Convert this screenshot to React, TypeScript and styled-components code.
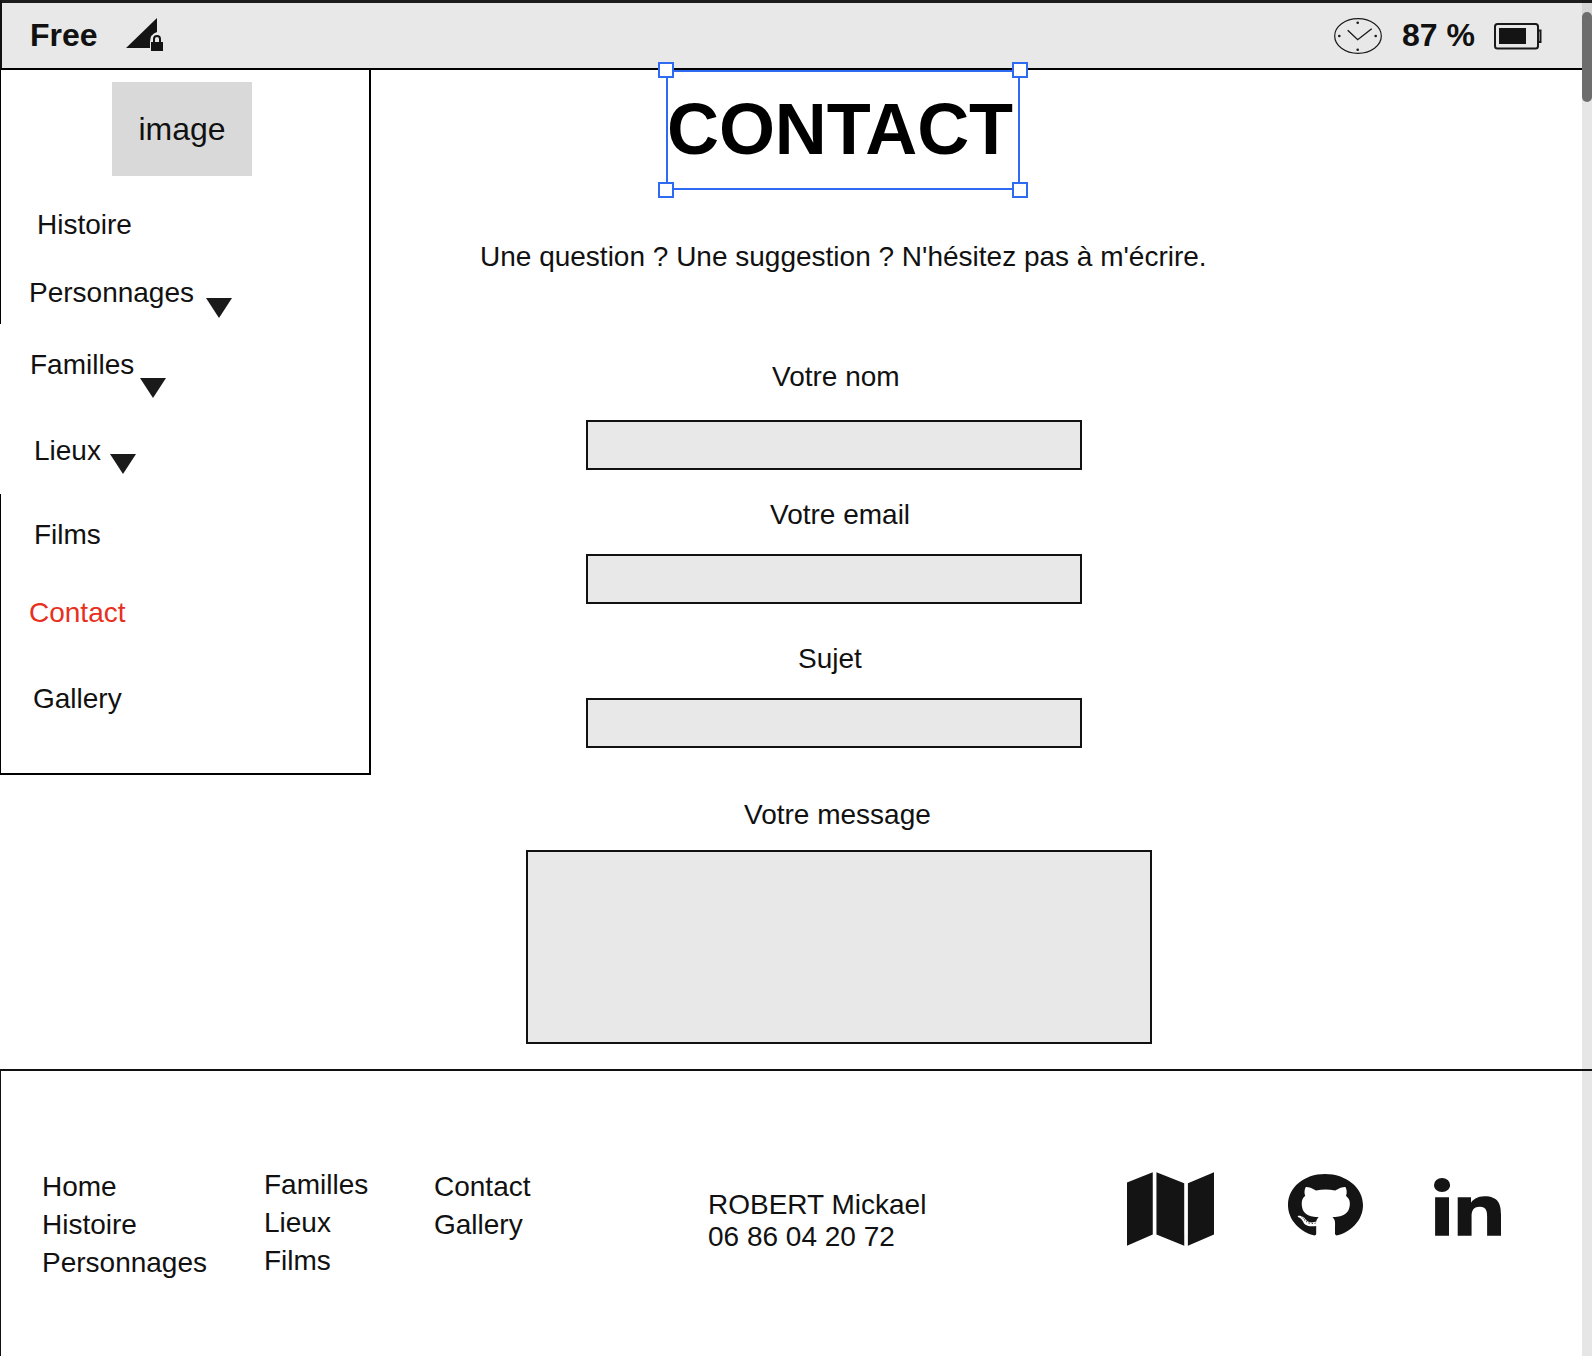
import React from "react";
import styled, { createGlobalStyle } from "styled-components";
import { FaGithub, FaLinkedinIn } from "react-icons/fa";

const Global = createGlobalStyle`
  html, body { margin: 0; padding: 0; background: #fff; overflow: hidden; }
  body { font-family: "Liberation Sans", Arial, sans-serif; color: #111; }
`;

const Page = styled.div`
  position: relative;
  width: 1592px;
  height: 1356px;
  overflow: hidden;
  display: flex;
  flex-direction: column;
`;

const StatusBar = styled.header`
  box-sizing: border-box;
  height: 70px;
  flex: none;
  display: flex;
  align-items: center;
  background: #e8e8e8;
  border-top: 3px solid #1c1c1c;
  border-left: 2px solid #111;
  border-bottom: 2px solid #000;
  padding: 0 50px 0 28px;
`;

const Carrier = styled.span`
  font-size: 32px;
  font-weight: 700;
  color: #111;
`;

const SignalIcon = styled.svg`
  margin: 0 0 3px 28px;
  width: 37px;
  height: 33px;
  flex: none;
`;

const StatusRight = styled.div`
  margin-left: auto;
  display: flex;
  align-items: center;
`;

const Percent = styled.span`
  font-size: 32px;
  font-weight: 700;
  margin: 0 19px 0 20px;
  color: #111;
`;

const ClockSvg = styled.svg`
  width: 48px;
  height: 36px;
  flex: none;
`;

const BatterySvg = styled.svg`
  width: 48px;
  height: 27px;
  margin-top: 2px;
  flex: none;
`;

const Body = styled.div`
  flex: none;
  height: 999px;
  display: flex;
  align-items: flex-start;
`;

const Sidebar = styled.nav`
  box-sizing: border-box;
  width: 371px;
  height: 705px;
  flex: none;
  border-right: 2px solid #000;
  border-bottom: 2px solid #000;
  background: linear-gradient(#000, #000) left top / 1px 254px no-repeat,
    linear-gradient(#000, #000) left bottom / 1px 279px no-repeat;
  display: flex;
  flex-direction: column;
  align-items: flex-start;
`;

const ImageBox = styled.div`
  width: 140px;
  height: 94px;
  margin: 12px 0 0 112px;
  background: #d9d9d9;
  display: flex;
  align-items: center;
  justify-content: center;
  font-size: 32px;
  color: #111;
`;

const NavItem = styled.a<{ $left: number; $top: number; $active?: boolean }>`
  display: flex;
  align-items: flex-start;
  height: 34px;
  line-height: 34px;
  margin: ${(p) => p.$top}px 0 0 ${(p) => p.$left}px;
  font-size: 28px;
  color: ${(p) => (p.$active ? "#e8301f" : "#111")};
  white-space: nowrap;
`;

const Caret = styled.span<{ $gap: number; $drop: number }>`
  width: 0;
  height: 0;
  margin: ${(p) => p.$drop}px 0 0 ${(p) => p.$gap}px;
  border-left: 13px solid transparent;
  border-right: 13px solid transparent;
  border-top: 20px solid #1a1a1a;
`;

const Main = styled.main`
  flex: 1;
  min-width: 0;
  display: flex;
  flex-direction: column;
  align-items: flex-start;
`;

const TitleBox = styled.div`
  position: relative;
  box-sizing: border-box;
  width: 354px;
  height: 120px;
  margin: 0 0 0 295px;
  border: 2px solid #2f6bf2;
  display: flex;
  align-items: flex-start;
`;

const Title = styled.h1`
  margin: 0 0 0 -1px;
  font-size: 72px;
  line-height: 114px;
  letter-spacing: -0.1px;
  font-weight: 700;
  color: #000;
  white-space: nowrap;
`;

const Handle = styled.span<{ $x: "left" | "right"; $y: "top" | "bottom" }>`
  position: absolute;
  box-sizing: border-box;
  width: 16px;
  height: 16px;
  background: #fff;
  border: 2px solid #2f6bf2;
  ${(p) => p.$x}: -10px;
  ${(p) => p.$y}: -10px;
`;

const Intro = styled.p`
  margin: 50px 0 0 109px;
  font-size: 28px;
  line-height: 34px;
  color: #111;
  white-space: nowrap;
`;

const FieldLabel = styled.label<{ $left: number; $top: number }>`
  display: block;
  margin: ${(p) => p.$top}px 0 0 ${(p) => p.$left}px;
  font-size: 28px;
  line-height: 34px;
  color: #111;
  white-space: nowrap;
`;

const Input = styled.div<{ $top: number }>`
  box-sizing: border-box;
  width: 496px;
  height: 50px;
  margin: ${(p) => p.$top}px 0 0 215px;
  background: #e8e8e8;
  border: 2px solid #111;
`;

const TextArea = styled.div`
  box-sizing: border-box;
  width: 626px;
  height: 194px;
  margin: 18px 0 0 155px;
  background: #e8e8e8;
  border: 2px solid #111;
`;

const Footer = styled.footer`
  position: relative;
  z-index: 1;
  box-sizing: border-box;
  flex: 1;
  display: flex;
  align-items: flex-start;
  border-top: 2px solid #111;
  background: linear-gradient(#111, #111) left top / 1px 100% no-repeat;
`;

const FooterColumn = styled.ul<{ $left: number; $top: number; $width: number }>`
  list-style: none;
  margin: ${(p) => p.$top}px 0 0 ${(p) => p.$left}px;
  padding: 0;
  width: ${(p) => p.$width}px;
  flex: none;
  font-size: 28px;
  line-height: 38px;
  color: #111;
  white-space: nowrap;
`;

const Contact = styled.address`
  flex: none;
  margin: 118px 0 0 0;
  width: 419px;
  font-style: normal;
  font-size: 28px;
  line-height: 32px;
  color: #111;
  white-space: nowrap;
`;

const SocialSlot = styled.a<{ $width: number; $top: number }>`
  display: flex;
  flex: none;
  width: ${(p) => p.$width}px;
  margin-top: ${(p) => p.$top}px;
  color: #141414;
`;

const GithubIcon = styled(FaGithub)`
  width: 75px;
  height: 65px;
`;

const LinkedinIcon = styled(FaLinkedinIn)`
  width: 67px;
  height: 66px;
`;

const Scrollbar = styled.div`
  position: absolute;
  top: 3px;
  right: 0;
  bottom: 0;
  width: 10px;
  background: linear-gradient(#d6d6d6 0 65px, #e6e6e6 65px);
`;

const Thumb = styled.div`
  position: absolute;
  top: 9px;
  left: 0;
  width: 10px;
  height: 90px;
  border-radius: 5px;
  background: #6d6d6d;
`;

const ClockIcon = () => (
  <ClockSvg viewBox="0 0 48 36" fill="none" stroke="#1a1a1a">
    <ellipse cx="24" cy="18" rx="23.3" ry="17.3" strokeWidth="1.2" />
    <path d="M13.7 12.3 L23.7 21.7 L37.7 10.7" strokeWidth="1.4" />
    <circle cx="23.7" cy="4.7" r="1.3" fill="#1a1a1a" stroke="none" />
    <circle cx="23.7" cy="31.7" r="1.3" fill="#1a1a1a" stroke="none" />
    <circle cx="5.3" cy="18" r="1.3" fill="#1a1a1a" stroke="none" />
    <circle cx="41.7" cy="18" r="1.3" fill="#1a1a1a" stroke="none" />
  </ClockSvg>
);

const BatteryIcon = () => (
  <BatterySvg viewBox="0 0 48 27" fill="none">
    <rect x="1" y="1" width="43" height="24.5" rx="2.5" stroke="#1a1a1a" strokeWidth="2" />
    <rect x="5" y="5" width="27" height="16" fill="#141414" />
    <path d="M44.5 7.5h2v11.5h-2" stroke="#1a1a1a" strokeWidth="2" />
  </BatterySvg>
);

const MapIcon = () => (
  <svg width="87" height="74" viewBox="80 97 260 220" fill="#141414">
    <path d="M80 128 L157 97 V283 L80 317 Z" />
    <path d="M168 97 L251 130 V317 L168 283 Z" />
    <path d="M262 130 L340 97 V283 L262 317 Z" />
  </svg>
);

export default function App() {
  return (
    <Page>
      <Global />
      <StatusBar>
        <Carrier>Free</Carrier>
        <SignalIcon viewBox="0 0 37 33">
          <path d="M0 30 L31 0 V14 Q24 16 24 24 V30 Z" fill="#141414" />
          <path
            d="M25 33 V24 H27 V21 a4 4 0 0 1 8 0 V24 H37 V33 Z M29 24 H33 V21 a2 2 0 0 0 -4 0 Z"
            fill="#141414"
            fillRule="evenodd"
          />
        </SignalIcon>
        <StatusRight>
          <ClockIcon />
          <Percent>87 %</Percent>
          <BatteryIcon />
        </StatusRight>
      </StatusBar>
      <Body>
        <Sidebar>
          <ImageBox>image</ImageBox>
          <NavItem $left={37} $top={32}>Histoire</NavItem>
          <NavItem $left={29} $top={34}>
            Personnages
            <Caret $gap={12} $drop={22} />
          </NavItem>
          <NavItem $left={30} $top={38}>
            Familles
            <Caret $gap={6} $drop={30} />
          </NavItem>
          <NavItem $left={34} $top={52}>
            Lieux
            <Caret $gap={9} $drop={20} />
          </NavItem>
          <NavItem $left={34} $top={50}>Films</NavItem>
          <NavItem $left={29} $top={44} $active>Contact</NavItem>
          <NavItem $left={33} $top={52}>Gallery</NavItem>
        </Sidebar>
        <Main>
          <TitleBox>
            <Title>CONTACT</Title>
            <Handle $x="left" $y="top" />
            <Handle $x="right" $y="top" />
            <Handle $x="left" $y="bottom" />
            <Handle $x="right" $y="bottom" />
          </TitleBox>
          <Intro>Une question ? Une suggestion ? N'hésitez pas à m'écrire.</Intro>
          <FieldLabel $left={401} $top={86}>Votre nom</FieldLabel>
          <Input $top={26} />
          <FieldLabel $left={399} $top={28}>Votre email</FieldLabel>
          <Input $top={22} />
          <FieldLabel $left={427} $top={38}>Sujet</FieldLabel>
          <Input $top={22} />
          <FieldLabel $left={373} $top={50}>Votre message</FieldLabel>
          <TextArea />
        </Main>
      </Body>
      <Footer>
        <FooterColumn $left={42} $top={97} $width={222}>
          <li>Home</li>
          <li>Histoire</li>
          <li>Personnages</li>
        </FooterColumn>
        <FooterColumn $left={0} $top={95} $width={170}>
          <li>Familles</li>
          <li>Lieux</li>
          <li>Films</li>
        </FooterColumn>
        <FooterColumn $left={0} $top={97} $width={274}>
          <li>Contact</li>
          <li>Gallery</li>
        </FooterColumn>
        <Contact>
          ROBERT Mickael
          <br />
          06 86 04 20 72
        </Contact>
        <SocialSlot $width={161} $top={101}><MapIcon /></SocialSlot>
        <SocialSlot $width={146} $top={102}>
          <GithubIcon preserveAspectRatio="none" />
        </SocialSlot>
        <SocialSlot $width={67} $top={107}>
          <LinkedinIcon preserveAspectRatio="none" />
        </SocialSlot>
      </Footer>
      <Scrollbar>
        <Thumb />
      </Scrollbar>
    </Page>
  );
}
